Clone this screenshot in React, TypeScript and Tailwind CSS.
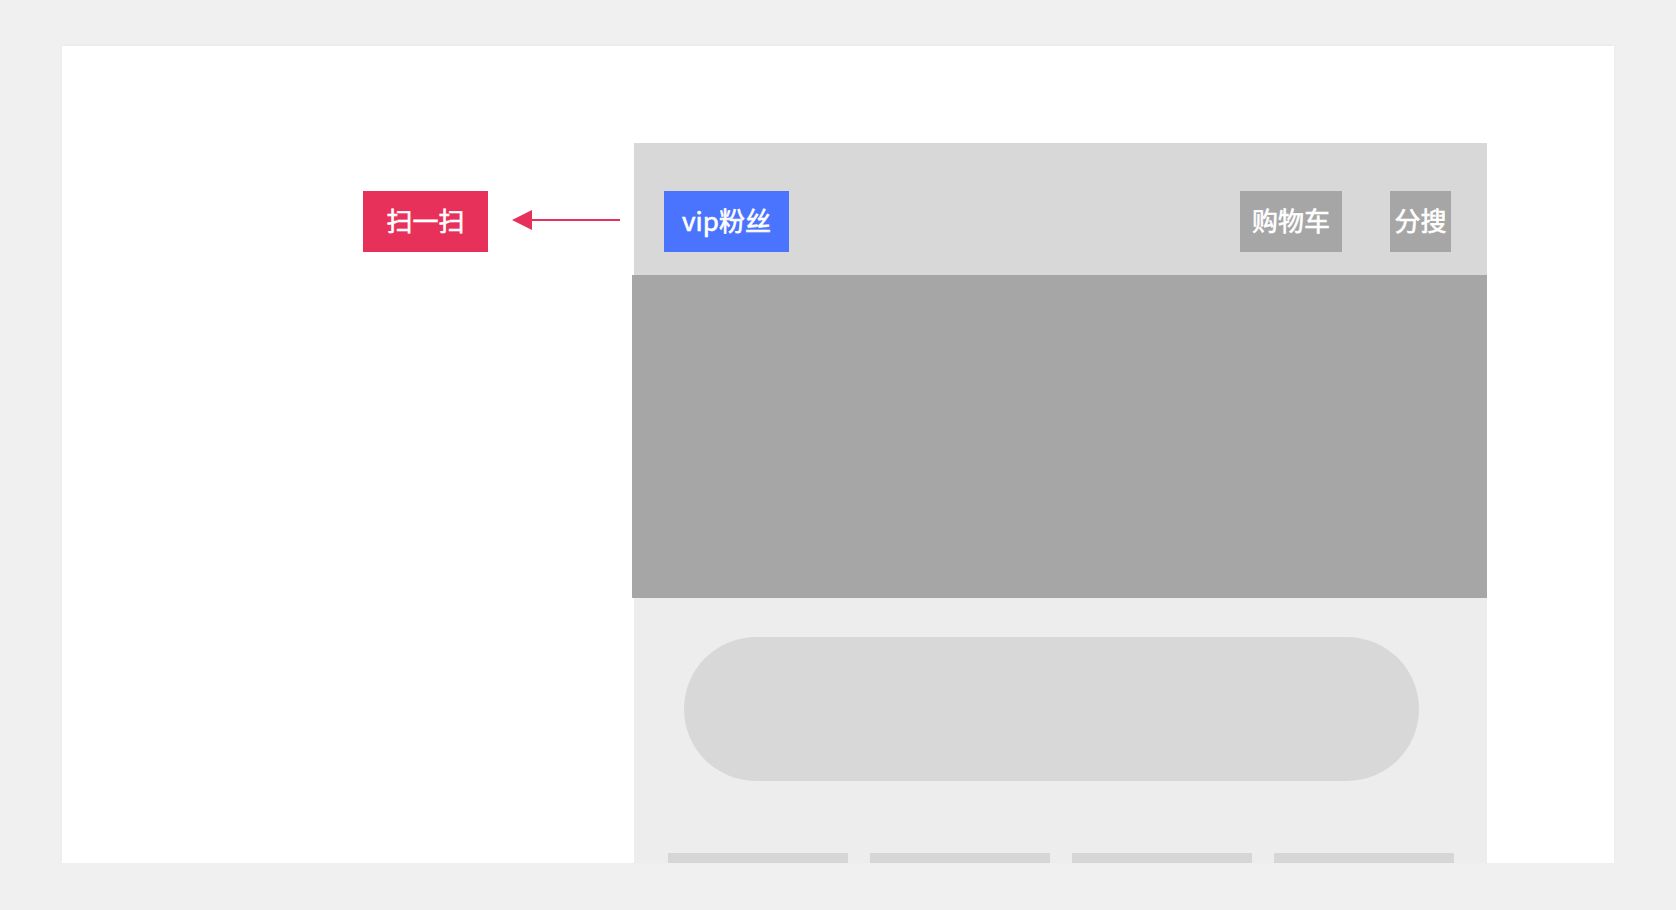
const font = { fontFamily: '"Noto Sans CJK SC", "Noto Sans", sans-serif' };

const Tag = ({ label, className }: { label: string; className: string }) => (
    <div
        className={`flex items-center justify-center shrink-0 h-[61px] pb-[3px] text-[26px] font-normal text-white leading-none [-webkit-text-stroke:0.6px_white] ${className}`}
    >
        {label}
    </div>
);

const App = () => {
    const bars = [0, 1, 2, 3];

    return (
        <div className="w-full h-[910px] bg-[#f0f0f0] px-[62px] pt-[46px] pb-[47px]" style={font}>
            <div className="flex h-[817px] overflow-hidden bg-white pt-[97px] shadow-[0_-1px_3px_rgba(0,0,0,0.03)]">
                {/* left annotation */}
                <div className="flex items-start w-[572px] shrink-0 pt-[48px]">
                    <Tag label="扫一扫" className="ml-[301px] w-[125px] bg-[#e8315a]" />
                    <div className="flex items-center h-[57px] ml-[24px]">
                        <svg width="108" height="22" viewBox="0 0 108 22">
                            <polygon points="0,11 20,1 20,21" fill="#e8315a" />
                            <rect x="18" y="10" width="90" height="2" fill="#e8315a" />
                        </svg>
                    </div>
                </div>

                {/* phone mock */}
                <div className="flex flex-col w-[853px] shrink-0">
                    <div className="flex items-start shrink-0 h-[132px] pt-[48px] pl-[30px] pr-[36px] bg-[#d8d8d8]">
                        <Tag label="vip粉丝" className="w-[125px] bg-[#4a74fe]" />
                        <div className="flex-1" />
                        <Tag label="购物车" className="w-[102px] bg-[#a6a6a6]" />
                        <Tag label="分搜" className="w-[61px] ml-[48px] bg-[#a6a6a6]" />
                    </div>
                    <div className="shrink-0 h-[323px] -ml-[2px] bg-[#a6a6a6]" />
                    <div className="shrink-0 h-[400px] bg-[#ededed] pt-[39px]">
                        <div className="ml-[50px] w-[735px] h-[144px] rounded-full bg-[#d8d8d8]" />
                        <div className="flex gap-[22px] mt-[72px] ml-[34px]">
                            {bars.map((i) => (
                                <div key={i} className="w-[180px] h-[40px] bg-[#d6d6d6]" />
                            ))}
                        </div>
                    </div>
                </div>
            </div>
        </div>
    );
};

export default App;
